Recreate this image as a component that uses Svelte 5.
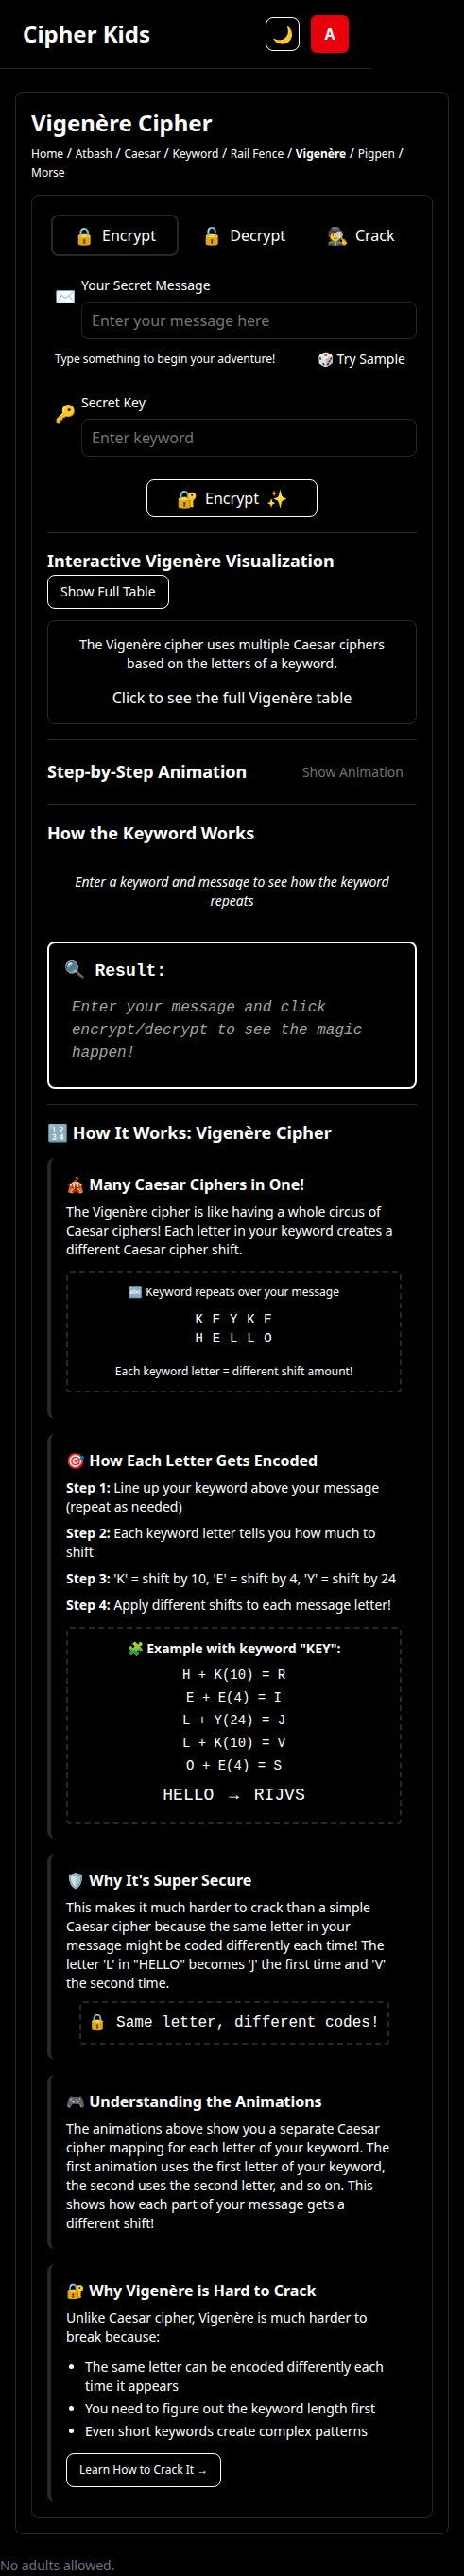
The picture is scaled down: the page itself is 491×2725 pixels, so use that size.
<script>
  const modes = [
    { icon: '🔒', label: 'Encrypt', active: true },
    { icon: '🔓', label: 'Decrypt' },
    { icon: '🕵️', label: 'Crack' },
  ];
  const crumbs = ['Home', 'Atbash', 'Caesar', 'Keyword', 'Rail Fence', 'Vigenère', 'Pigpen', 'Morse'];
  const steps = [
    'Line up your keyword above your message (repeat as needed)',
    'Each keyword letter tells you how much to shift',
    "'K' = shift by 10, 'E' = shift by 4, 'Y' = shift by 24",
    'Apply different shifts to each message letter!',
  ];
  const sums = ['H + K(10) = R', 'E + E(4) = I', 'L + Y(24) = J', 'L + K(10) = V', 'O + E(4) = S'];
  const reasons = [
    'The same letter can be encoded differently each time it appears',
    'You need to figure out the keyword length first',
    'Even short keywords create complex patterns',
  ];
</script>

<header>
  <div class="brand">Cipher Kids</div>
  <button class="theme">🌙</button>
  <button class="avatar">A</button>
</header>

<main>
  <h1>Vigenère Cipher</h1>
  <nav>
    {#each crumbs as c, i}<span class:current={c === 'Vigenère'}>{c}</span>{#if i < crumbs.length - 1}{' / '}{/if}{/each}
  </nav>

  <div class="panel">
    <div class="tabs">
      {#each modes as m}
        <button class="tab" class:active={m.active}><span class="emoji">{m.icon}</span><span>{m.label}</span></button>
      {/each}
    </div>

    <div class="field">
      <span class="ficon">✉️</span>
      <div class="fbody">
        <label for="msg">Your Secret Message</label>
        <input id="msg" placeholder="Enter your message here" />
      </div>
    </div>
    <div class="hint">
      <span>Type something to begin your adventure!</span>
      <button class="sample">🎲 Try Sample</button>
    </div>
    <div class="field second">
      <span class="ficon">🔑</span>
      <div class="fbody">
        <label for="key">Secret Key</label>
        <input id="key" placeholder="Enter keyword" />
      </div>
    </div>
    <button class="go"><span class="emoji">🔐</span><span>Encrypt</span><span class="emoji">✨</span></button>

    <section class="visual">
      <h3>Interactive Vigenère Visualization</h3>
      <button class="outline">Show Full Table</button>
      <div class="notice">
        <p>The Vigenère cipher uses multiple Caesar ciphers based on the letters of a keyword.</p>
        <p class="big">Click to see the full Vigenère table</p>
      </div>
    </section>

    <section class="steps">
      <h3>Step-by-Step Animation</h3>
      <button class="ghost">Show Animation</button>
    </section>

    <section class="keyworks">
      <h3>How the Keyword Works</h3>
      <p>Enter a keyword and message to see how the keyword repeats</p>
    </section>

    <div class="result">
      <h3><span>🔍</span><span>Result:</span></h3>
      <p>Enter your message and click encrypt/decrypt to see the magic happen!</p>
    </div>

    <section class="how">
      <h2>🔢 How It Works: Vigenère Cipher</h2>

      <article>
        <h4>🎪 Many Caesar Ciphers in One!</h4>
        <p>The Vigenère cipher is like having a whole circus of Caesar ciphers! Each letter in your keyword creates a different Caesar cipher shift.</p>
        <div class="dashed repeat">
          <p class="small">🔤 Keyword repeats over your message</p>
          <div class="letters">K E Y K E<br />H E L L O</div>
          <p class="small">Each keyword letter = different shift amount!</p>
        </div>
      </article>

      <article>
        <h4>🎯 How Each Letter Gets Encoded</h4>
        {#each steps as s, i}
          <p class="step"><b>Step {i + 1}:</b> {s}</p>
        {/each}
        <div class="dashed example">
          <p><b>🧩 Example with keyword "KEY":</b></p>
          {#each sums as s}<div class="sum">{s}</div>{/each}
          <div class="outcome">HELLO <span>→</span> RIJVS</div>
        </div>
      </article>

      <article>
        <h4>🛡️ Why It's Super Secure</h4>
        <p>This makes it much harder to crack than a simple Caesar cipher because the same letter in your message might be coded differently each time! The letter 'L' in "HELLO" becomes 'J' the first time and 'V' the second time.</p>
        <div class="dashed codes">🔒 Same letter, different codes!</div>
      </article>

      <article class="anim">
        <h4>🎮 Understanding the Animations</h4>
        <p>The animations above show you a separate Caesar cipher mapping for each letter of your keyword. The first animation uses the first letter of your keyword, the second uses the second letter, and so on. This shows how each part of your message gets a different shift!</p>
      </article>

      <article>
        <h4>🔐 Why Vigenère is Hard to Crack</h4>
        <p>Unlike Caesar cipher, Vigenère is much harder to break because:</p>
        <ul>
          {#each reasons as r}<li>{r}</li>{/each}
        </ul>
        <button class="outline learn">Learn How to Crack It →</button>
      </article>
    </section>
  </div>
</main>

<footer>No adults allowed.</footer>

<style>
  :global(body) {
    background: #000;
    color: #fff;
    font: 14px/20px 'Noto Sans', sans-serif;
  }
  * { box-sizing: border-box; }
  h1, h2, h3, h4, p, ul { margin: 0; }
  button {
    background: none;
    border: 0;
    padding: 0;
    color: inherit;
    font: inherit;
    white-space: nowrap;
  }
  header {
    width: 393px;
    height: 73px;
    padding: 0 24px;
    display: flex;
    align-items: center;
    gap: 12px;
    border-bottom: 1px solid #27272a;
  }
  .brand { flex: 1; font-size: 24px; font-weight: 700; line-height: 32px; }
  .theme {
    width: 36px;
    height: 36px;
    border: 1px solid #fff;
    border-radius: 8px;
    font-size: 18px;
  }
  .avatar {
    width: 40px;
    height: 40px;
    border-radius: 6px;
    background: #e7000b;
    font-size: 16px;
    font-weight: 700;
  }
  main {
    margin: 24px 16px 0;
    border: 1px solid #27272a;
    border-radius: 8px;
    padding: 16px;
  }
  h1 { font-size: 24px; line-height: 32px; }
  nav { margin-top: 6px; height: 40px; }
  nav span { font-size: 12px; line-height: 16px; }
  .current { font-weight: 700; }
  .panel {
    margin-top: 14px;
    border: 1px solid #27272a;
    border-radius: 8px;
    padding: 20px 16px 16px;
  }
  .tabs {
    display: grid;
    grid-template-columns: 135px 137.5px 110.5px;
    margin: 0 4px;
  }
  .tab {
    height: 44px;
    display: flex;
    align-items: center;
    justify-content: center;
    gap: 8px;
    font-size: 16px;
    border: 2px solid transparent;
    border-radius: 8px;
  }
  .emoji { font-size: 18px; }
  .active { border-color: #27272a; }
  .field { display: flex; margin-top: 21px; }
  .second { margin-top: 18px; }
  .ficon { width: 36px; padding: 11px 0 0 8px; font-size: 18px; }
  .fbody { flex: 1; }
  label { display: block; line-height: 20px; margin-bottom: 7px; }
  input {
    display: block;
    width: 100%;
    height: 40px;
    padding: 0 10px;
    border: 1px solid #27272a;
    border-radius: 8px;
    background: none;
    color: #fff;
    font: 16px 'Noto Sans', sans-serif;
  }
  .hint {
    display: flex;
    justify-content: space-between;
    align-items: center;
    padding: 0 12px 0 8px;
    margin-top: 3px;
    height: 36px;
    font-size: 12px;
  }
  .sample { font-size: 14px; }
  .go {
    display: flex;
    align-items: center;
    justify-content: center;
    gap: 8px;
    width: 181px;
    height: 40px;
    margin: 24px auto 16px;
    border: 1px solid #fff;
    border-radius: 8px;
    font-size: 16px;
  }
  h2, h3 { font-size: 18px; line-height: 26px; }
  h3 { margin-bottom: 2px; }
  h2 { margin-bottom: 14px; }
  .visual { border-top: 1px solid #27272a; padding: 16px 0; }
  .outline {
    display: block;
    height: 36px;
    padding: 0 13px;
    border: 1px solid #fff;
    border-radius: 8px;
  }
  .notice {
    margin-top: 12px;
    height: 110px;
    border: 1px solid #27272a;
    border-radius: 8px;
    padding: 15px 24px;
    text-align: center;
  }
  .big { font-size: 16px; line-height: 24px; margin-top: 14px; }
  .steps {
    display: flex;
    justify-content: space-between;
    align-items: center;
    height: 69px;
    padding-right: 14px;
    border-top: 1px solid #27272a;
  }
  .ghost { color: #737373; }
  .keyworks { border-top: 1px solid #27272a; padding-top: 16px; }
  .keyworks p { margin: 29px 24px 33px; text-align: center; font-style: italic; }
  .result {
    height: 156px;
    border: 2px solid #fff;
    border-radius: 8px;
    padding: 16px;
    font-family: 'Liberation Mono', monospace;
  }
  .result h3 { display: flex; gap: 10.5px; }
  .result p {
    margin: 14px 8px 0;
    font-size: 16px;
    line-height: 24px;
    font-style: italic;
    color: #a3a3a3;
  }
  .how {
    margin-top: 16px;
    border-top: 1px solid #27272a;
    padding-top: 16px;
  }
  article {
    border-left: 4px solid #27272a;
    border-radius: 8px;
    padding: 16px;
    margin-bottom: 16px;
  }
  article:last-child { margin-bottom: 0; }
  h4 { font-size: 16px; line-height: 24px; margin-bottom: 7px; }
  .dashed {
    border: 2px dashed #27272a;
    border-radius: 4px;
    text-align: center;
  }
  .repeat { height: 128px; margin: 13px 0 12px; padding-top: 10px; }
  .small { font-size: 12px; }
  .letters {
    margin: 9px 0 15px;
    font-family: 'Liberation Mono', monospace;
    letter-spacing: 0.7px;
  }
  .step { margin-bottom: 8px; }
  .example { height: 208px; margin-top: 13px; padding-top: 11px; }
  .example p { margin-bottom: 6px; }
  .sum { font-family: 'Liberation Mono', monospace; line-height: 24px; }
  .outcome {
    margin-top: 5px;
    font: 18px/28px 'Liberation Mono', monospace;
  }
  .outcome span { margin: 0 5px; }
  .codes {
    width: 328px;
    height: 46px;
    margin: 9px auto 0;
    font: 16px/42px 'Liberation Mono', monospace;
    white-space: nowrap;
  }
  .anim { padding-bottom: 17px; }
  ul { margin: 12px 0 13px; padding-left: 20px; }
  li { margin-bottom: 4px; }
  .learn { font-size: 12px; }
  footer { margin-top: 23px; height: 21px; color: #6b7280; }
</style>
